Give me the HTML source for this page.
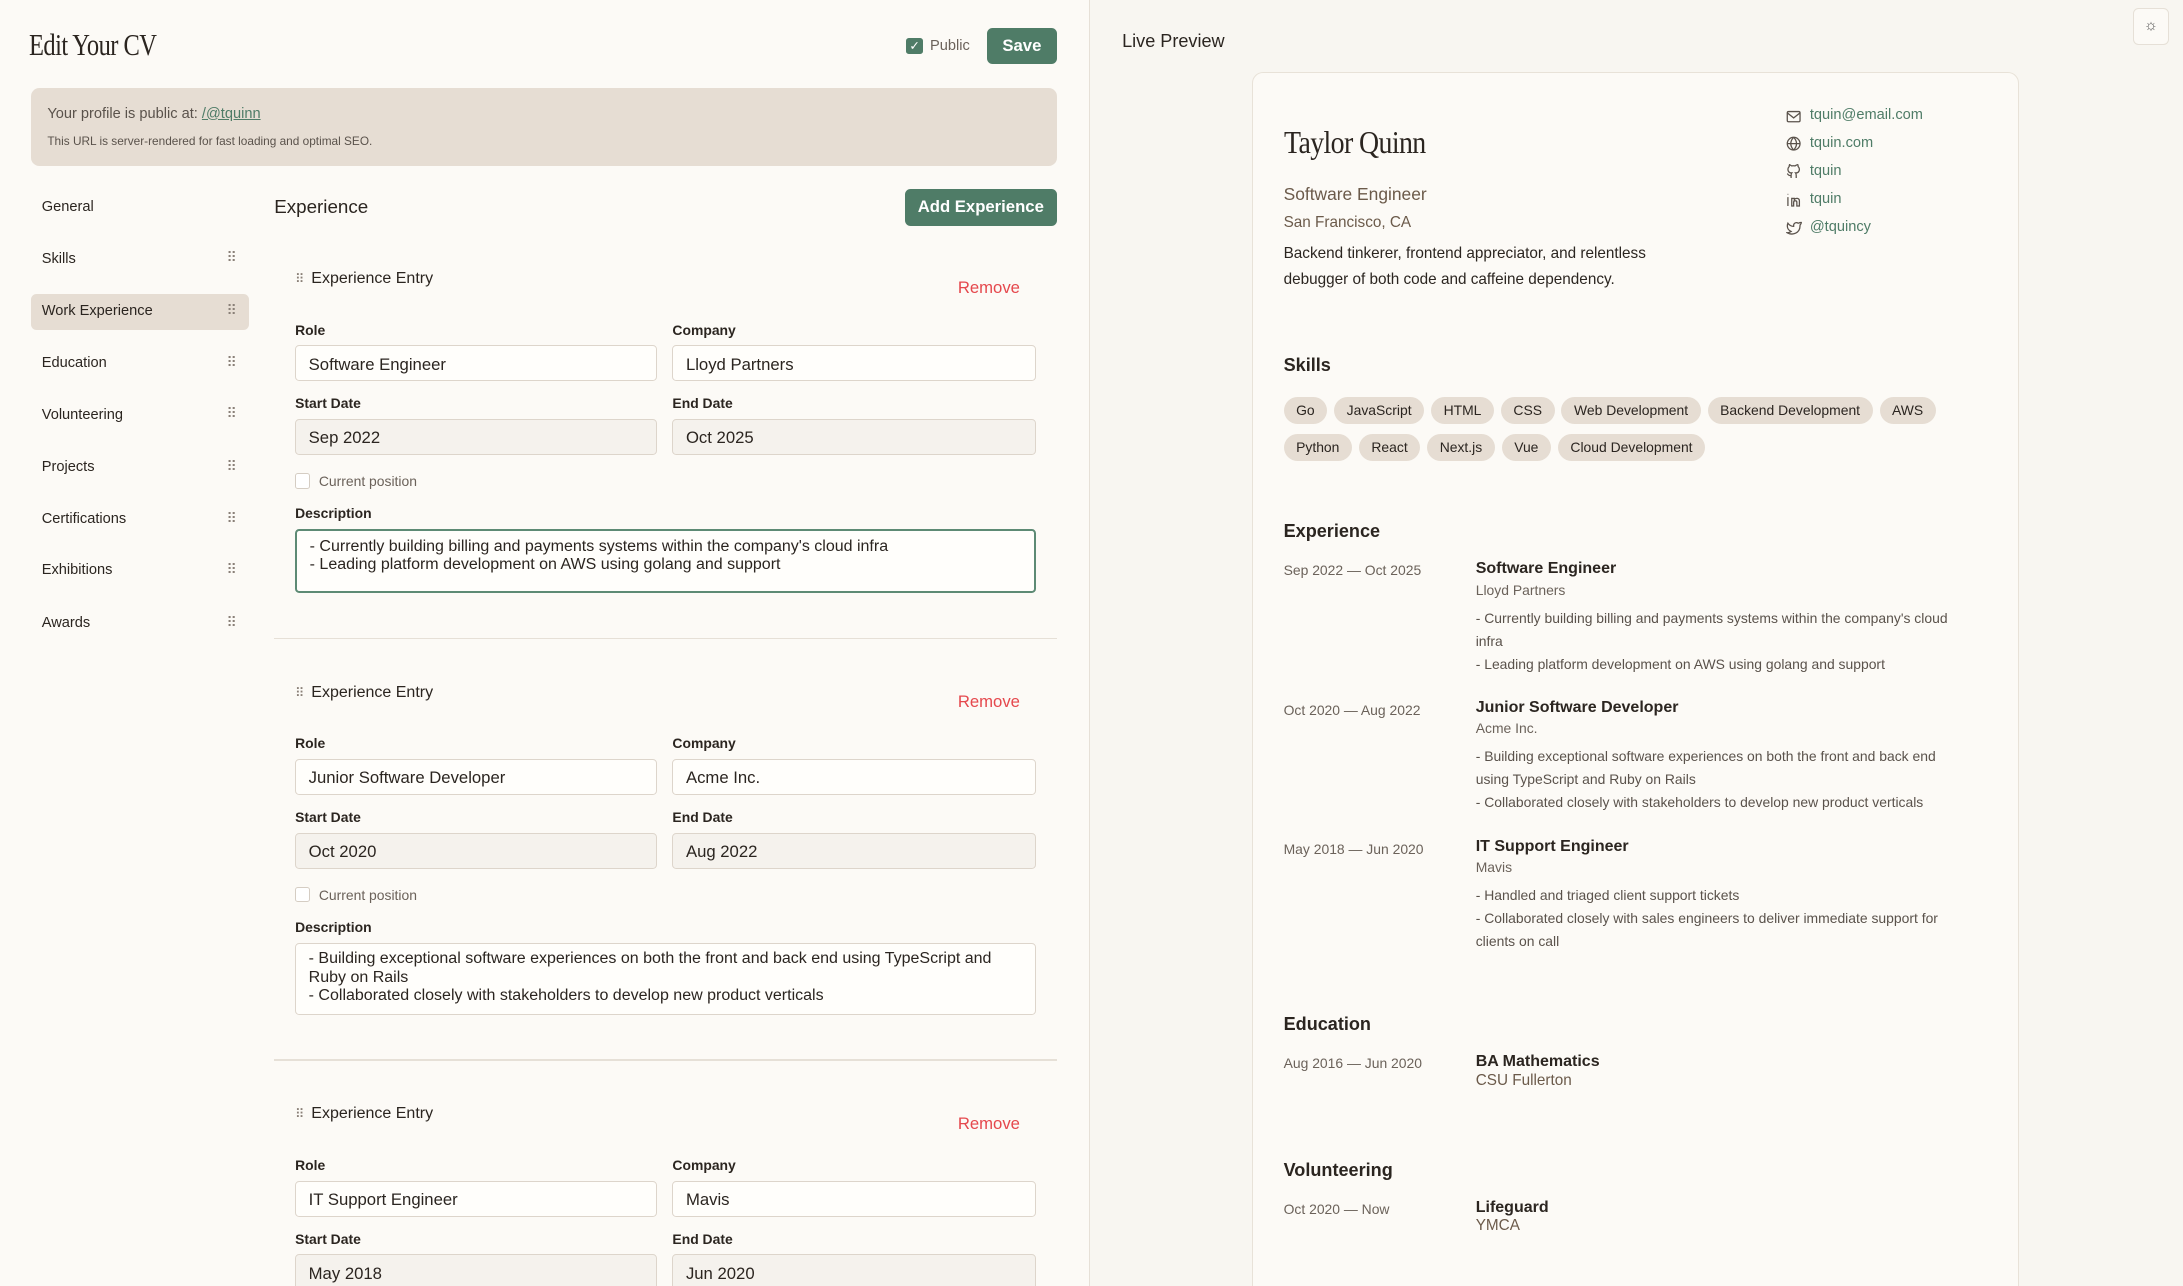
<!DOCTYPE html>
<html><head><meta charset="utf-8"><style>
*{box-sizing:border-box;margin:0;padding:0}
html,body{width:2183px;height:1286px;overflow:hidden;background:#fcfaf6}
#z{zoom:1.3922;width:1568px;height:924px;position:relative;font-family:"Liberation Sans",sans-serif;color:#2b2520;overflow:hidden}
.a{position:absolute;white-space:nowrap}
.serif{font-family:"Liberation Serif",serif;letter-spacing:-0.5px;transform-origin:left top}
.btn{background:#4f7c67;color:#fff;font-weight:bold;border-radius:4px;text-align:center}
.nav{position:absolute;left:22px;width:157px;height:26px;font-size:10.5px;padding:7px 8px;border-radius:4px}
.nav .d{position:absolute;right:10px;top:6px;color:#8a8078;font-size:10px;letter-spacing:-1px}
.lbl{position:absolute;font-size:10px;font-weight:bold;color:#2b2520}
.in{position:absolute;height:26px;border:1px solid #ddd5cb;border-radius:3px;background:#fffefb;font-size:12px;padding:6px 9px}
.in.g{background:#f5f2ed}
.ta{position:absolute;border:1px solid #ddd5cb;border-radius:3px;background:#fffefb;font-size:11.5px;padding:5px 9px;line-height:13px;white-space:normal}
.rm{position:absolute;color:#e5484d;font-size:12px}
.cb{position:absolute;width:11px;height:11px;border:1px solid #d5cdc3;border-radius:2px;background:#fff}
.cp{position:absolute;font-size:10px;color:#6b625a}
.hr{position:absolute;left:197px;width:562px;height:1px;background:#e6e0d7}
.pill{display:inline-block;background:#e6ddd3;border-radius:10px;padding:4px 9px;font-size:10px;margin-right:5px;margin-bottom:6px}
.h2{position:absolute;font-size:13px;font-weight:bold}
.dt{position:absolute;font-size:10px;color:#6b625a}
.jt{position:absolute;font-size:11.5px;font-weight:bold}
.co{position:absolute;font-size:10px;color:#6b625a}
.bl{position:absolute;font-size:10px;color:#5a524b;line-height:16.5px;white-space:normal;width:352px}
.ct{position:absolute;left:1283px;font-size:10.5px;color:#4f7c67}
.ct svg{position:absolute;left:0;top:1px}
.ct span{position:absolute;left:17px;white-space:nowrap}
</style></head><body><div id="z">
<div class="a serif" style="left:21px;top:20px;font-size:22px;transform:scaleX(0.8)">Edit Your CV</div>
<div class="a" style="left:651px;top:27px;width:12px;height:12px;background:#4f7c67;border-radius:2px;color:#fff;font-size:9px;text-align:center;line-height:12px">✓</div>
<div class="a" style="left:668px;top:27px;font-size:10.5px;color:#6b625a">Public</div>
<div class="a btn" style="left:709px;top:20px;width:50px;height:26px;line-height:26px;font-size:12px">Save</div>
<div class="a" style="left:22px;top:63px;width:737px;height:56px;background:#e6ddd3;border-radius:6px"></div>
<div class="a" style="left:34px;top:76px;font-size:10.5px;color:#5a524b">Your profile is public at: <span style="color:#4f7c67;text-decoration:underline">/@tquinn</span></div>
<div class="a" style="left:34px;top:96px;font-size:8.5px;color:#5a524b">This URL is server-rendered for fast loading and optimal SEO.</div>

<div class="nav" style="top:136px">General</div>
<div class="nav" style="top:173px">Skills<span class="d">⠿</span></div>
<div class="nav" style="top:211px;background:#e6ddd3">Work Experience<span class="d">⠿</span></div>
<div class="nav" style="top:248px">Education<span class="d">⠿</span></div>
<div class="nav" style="top:285px">Volunteering<span class="d">⠿</span></div>
<div class="nav" style="top:323px">Projects<span class="d">⠿</span></div>
<div class="nav" style="top:360px">Certifications<span class="d">⠿</span></div>
<div class="nav" style="top:397px">Exhibitions<span class="d">⠿</span></div>
<div class="nav" style="top:435px">Awards<span class="d">⠿</span></div>

<div class="a" style="left:197px;top:141px;font-size:13.5px">Experience</div>
<div class="a btn" style="left:650px;top:136px;width:109px;height:26px;line-height:26px;font-size:12px">Add Experience</div>

<div class="a" style="left:212px;top:194px;font-size:11.5px"><span style="color:#8a8078;font-size:9px;margin-right:5px">⠿</span>Experience Entry</div>
<div class="rm" style="left:688px;top:200px">Remove</div>
<div class="lbl" style="left:212px;top:231px">Role</div><div class="lbl" style="left:483px;top:231px">Company</div>
<div class="in" style="left:212px;top:248px;width:260px">Software Engineer</div>
<div class="in" style="left:483px;top:248px;width:261px">Lloyd Partners</div>
<div class="lbl" style="left:212px;top:284px">Start Date</div><div class="lbl" style="left:483px;top:284px">End Date</div>
<div class="in g" style="left:212px;top:301px;width:260px">Sep 2022</div>
<div class="in g" style="left:483px;top:301px;width:261px">Oct 2025</div>
<div class="cb" style="left:212px;top:340px"></div><div class="cp" style="left:229px;top:340px">Current position</div>
<div class="lbl" style="left:212px;top:363px">Description</div>
<div class="ta" style="left:212px;top:380px;width:532px;height:46px;border:2px solid #5d8a74">- Currently building billing and payments systems within the company's cloud infra<br>- Leading platform development on AWS using golang and support</div>
<div class="hr" style="top:458px"></div>

<div class="a" style="left:212px;top:491px;font-size:11.5px"><span style="color:#8a8078;font-size:9px;margin-right:5px">⠿</span>Experience Entry</div>
<div class="rm" style="left:688px;top:497px">Remove</div>
<div class="lbl" style="left:212px;top:528px">Role</div><div class="lbl" style="left:483px;top:528px">Company</div>
<div class="in" style="left:212px;top:545px;width:260px">Junior Software Developer</div>
<div class="in" style="left:483px;top:545px;width:261px">Acme Inc.</div>
<div class="lbl" style="left:212px;top:581px">Start Date</div><div class="lbl" style="left:483px;top:581px">End Date</div>
<div class="in g" style="left:212px;top:598px;width:260px">Oct 2020</div>
<div class="in g" style="left:483px;top:598px;width:261px">Aug 2022</div>
<div class="cb" style="left:212px;top:637px"></div><div class="cp" style="left:229px;top:637px">Current position</div>
<div class="lbl" style="left:212px;top:660px">Description</div>
<div class="ta" style="left:212px;top:677px;width:532px;height:52px">- Building exceptional software experiences on both the front and back end using TypeScript and Ruby on Rails<br>- Collaborated closely with stakeholders to develop new product verticals</div>
<div class="hr" style="top:761px"></div>

<div class="a" style="left:212px;top:794px;font-size:11.5px"><span style="color:#8a8078;font-size:9px;margin-right:5px">⠿</span>Experience Entry</div>
<div class="rm" style="left:688px;top:800px">Remove</div>
<div class="lbl" style="left:212px;top:831px">Role</div><div class="lbl" style="left:483px;top:831px">Company</div>
<div class="in" style="left:212px;top:848px;width:260px">IT Support Engineer</div>
<div class="in" style="left:483px;top:848px;width:261px">Mavis</div>
<div class="lbl" style="left:212px;top:884px">Start Date</div><div class="lbl" style="left:483px;top:884px">End Date</div>
<div class="in g" style="left:212px;top:901px;width:260px">May 2018</div>
<div class="in g" style="left:483px;top:901px;width:261px">Jun 2020</div>

<div class="a" style="left:782px;top:0;width:786px;height:924px;background:#f8f6f1;border-left:1px solid #e6e0d7"></div>
<div class="a" style="left:806px;top:22px;font-size:13px">Live Preview</div>
<div class="a" style="left:1532px;top:6px;width:26px;height:26px;border:1px solid #e6e0d7;border-radius:4px;background:#fcfaf6;text-align:center;line-height:24px;font-size:11px;color:#555">☼</div>
<div class="a" style="left:899px;top:52px;width:551px;height:900px;background:#fcfaf6;border:1px solid #e8e2d8;border-radius:8px"></div>

<div class="a serif" style="left:922px;top:89px;font-size:23px;transform:scaleX(0.87)">Taylor Quinn</div>
<div class="a" style="left:922px;top:132px;font-size:12.5px;color:#6b5a4a">Software Engineer</div>
<div class="a" style="left:922px;top:154px;font-size:11px;color:#6b5a4a">San Francisco, CA</div>
<div class="a" style="left:922px;top:173px;font-size:11px;line-height:19px">Backend tinkerer, frontend appreciator, and relentless<br>debugger of both code and caffeine dependency.</div>

<div class="ct" style="top:77px"><svg width="11" height="11" viewBox="0 0 12 12" fill="none" stroke="#5a524b"><rect x="1" y="2" width="10" height="8" rx="1"/><path d="M1 3l5 4 5-4"/></svg><span>tquin@email.com</span></div>
<div class="ct" style="top:97px"><svg width="11" height="11" viewBox="0 0 12 12" fill="none" stroke="#5a524b"><circle cx="6" cy="6" r="5"/><path d="M1 6h10M6 1c-3 3-3 7 0 10M6 1c3 3 3 7 0 10"/></svg><span>tquin.com</span></div>
<div class="ct" style="top:117px"><svg width="11" height="11" viewBox="0 0 12 12" fill="none" stroke="#5a524b"><path d="M4 11V9c-2 .5-2.5-1-3-1.5M8 11V9c0-1 0-1.5-.5-2 2 0 3-1 3-3 0-1-.5-1.5-1-2 0-.5 0-1-.3-1.5C8.5.5 8 1 7 1.5a5 5 0 00-2.5 0C3.5 1 3 .5 2.8.5c-.3.5-.3 1-.3 1.5-.5.5-1 1-1 2 0 2 1 3 3 3-.5.5-.5 1-.5 2"/></svg><span>tquin</span></div>
<div class="ct" style="top:137px"><svg width="11" height="11" viewBox="0 0 12 12" fill="none" stroke="#5a524b"><path d="M1.5 4v7M1.5 1.5v.5M4.5 11V5h2v1c1-1.5 4-1.5 4 1v4h-2V8c0-1.5-2.5-1.5-2.5 0v3z"/></svg><span>tquin</span></div>
<div class="ct" style="top:157px"><svg width="11" height="11" viewBox="0 0 12 12" fill="none" stroke="#5a524b"><path d="M11 2c-.5.3-1 .5-1.5.5A2.2 2.2 0 006 4.5v.5C4 5 2.5 4 1.5 2.5c0 0-2 4.5 2.5 6.5-1 .7-2 1-3 1 4.5 2.5 10 0 10-5.5 0-.2 0-.3 0-.5.5-.5 1-1 1-2z"/></svg><span>@tquincy</span></div>

<div class="h2" style="left:922px;top:255px">Skills</div>
<div class="a" style="left:922px;top:284px;width:500px;white-space:normal"><span class="pill">Go</span><span class="pill">JavaScript</span><span class="pill">HTML</span><span class="pill">CSS</span><span class="pill">Web Development</span><span class="pill">Backend Development</span><span class="pill">AWS</span><span class="pill">Python</span><span class="pill">React</span><span class="pill">Next.js</span><span class="pill">Vue</span><span class="pill">Cloud Development</span></div>

<div class="h2" style="left:922px;top:374px">Experience</div>
<div class="dt" style="left:922px;top:404px">Sep 2022 — Oct 2025</div>
<div class="jt" style="left:1060px;top:402px">Software Engineer</div>
<div class="co" style="left:1060px;top:418px">Lloyd Partners</div>
<div class="bl" style="left:1060px;top:436px">- Currently building billing and payments systems within the company's cloud infra<br>- Leading platform development on AWS using golang and support</div>

<div class="dt" style="left:922px;top:504px">Oct 2020 — Aug 2022</div>
<div class="jt" style="left:1060px;top:502px">Junior Software Developer</div>
<div class="co" style="left:1060px;top:517px">Acme Inc.</div>
<div class="bl" style="left:1060px;top:535px">- Building exceptional software experiences on both the front and back end using TypeScript and Ruby on Rails<br>- Collaborated closely with stakeholders to develop new product verticals</div>

<div class="dt" style="left:922px;top:604px">May 2018 — Jun 2020</div>
<div class="jt" style="left:1060px;top:602px">IT Support Engineer</div>
<div class="co" style="left:1060px;top:617px">Mavis</div>
<div class="bl" style="left:1060px;top:635px">- Handled and triaged client support tickets<br>- Collaborated closely with sales engineers to deliver immediate support for clients on call</div>

<div class="h2" style="left:922px;top:728px">Education</div>
<div class="dt" style="left:922px;top:758px">Aug 2016 — Jun 2020</div>
<div class="jt" style="left:1060px;top:756px">BA Mathematics</div>
<div class="a" style="left:1060px;top:770px;font-size:11px;color:#6b5a4a">CSU Fullerton</div>

<div class="h2" style="left:922px;top:833px">Volunteering</div>
<div class="dt" style="left:922px;top:863px">Oct 2020 — Now</div>
<div class="jt" style="left:1060px;top:861px">Lifeguard</div>
<div class="a" style="left:1060px;top:874px;font-size:11px;color:#6b5a4a">YMCA</div>
</div></body></html>
